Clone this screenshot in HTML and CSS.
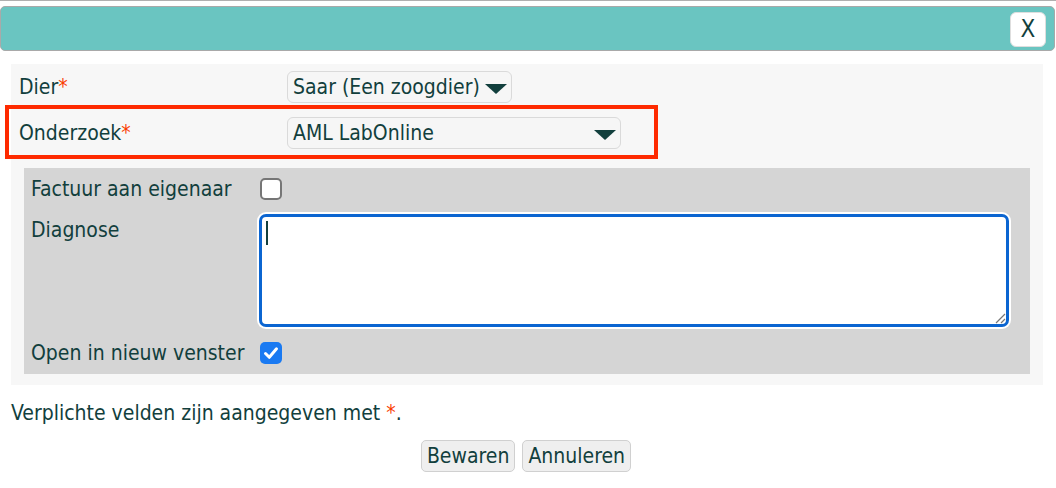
FILE: index.html
```html
<!DOCTYPE html>
<html lang="nl">
<head>
<meta charset="utf-8">
<title>Onderzoek</title>
<link rel="stylesheet" href="styles.css">
</head>
<body>
<div class="topline"></div>
<div class="titlebar"><button class="close" type="button">X</button></div>
<div class="panel">
  <div class="row">
    <div class="label">Dier<span class="req">*</span></div>
    <div class="select select-dier"><span>Saar (Een zoogdier)</span><svg class="arrow" viewBox="0 0 22 10" width="22" height="10"><path d="M0 0H22L11 10Z"/></svg></div>
  </div>
  <div class="row highlight">
    <div class="label">Onderzoek<span class="req">*</span></div>
    <div class="select select-wide"><span>AML LabOnline</span><svg class="arrow" viewBox="0 0 22 10" width="22" height="10"><path d="M0 0H22L11 10Z"/></svg></div>
  </div>
  <div class="subpanel">
    <div class="subrow check-row">
      <div class="sublabel">Factuur aan eigenaar</div>
      <span class="cb"></span>
    </div>
    <div class="subrow diag-row">
      <div class="sublabel">Diagnose</div>
      <div class="textarea"><span class="caret"></span><svg class="grip" viewBox="0 0 12 12" width="12" height="12"><path d="M11 2L2 11M11 7L7 11" stroke="#777" stroke-width="1.2" fill="none"/></svg></div>
    </div>
    <div class="subrow check-row last">
      <div class="sublabel">Open in nieuw venster</div>
      <span class="cb checked"><svg viewBox="0 0 22 22" width="22" height="22"><path d="M5.5 11.5L9.3 15.3L16.5 6.8" stroke="#fff" stroke-width="3" fill="none" stroke-linecap="round" stroke-linejoin="round"/></svg></span>
    </div>
  </div>
</div>
<p class="note">Verplichte velden zijn aangegeven met <span class="req">*</span>.</p>
<div class="buttons">
  <button class="btn" type="button">Bewaren</button>
  <button class="btn" type="button">Annuleren</button>
</div>
</body>
</html>
```
FILE: styles.css
```css
html, body {
  margin: 0;
  padding: 0;
  background: #ffffff;
}
body {
  font-family: "DejaVu Sans Condensed", "DejaVu Sans", Verdana, sans-serif;
  font-stretch: condensed;
  font-size: 21px;
  color: #123f3d;
  width: 1056px;
  height: 488px;
  overflow: hidden;
}
.topline {
  height: 1px;
  background: #b0b0b0;
}
.titlebar {
  box-sizing: border-box;
  margin-top: 5px;
  width: 1055px;
  height: 45px;
  background: #6ac5c1;
  border: 1px solid #a9a9a9;
  border-radius: 5px;
  display: flex;
  justify-content: flex-end;
  align-items: center;
  padding-right: 8px;
}
.close {
  box-sizing: border-box;
  width: 36px;
  height: 35px;
  margin-top: 1px;
  background: #ffffff;
  border: 1px solid #dedede;
  border-radius: 6px;
  font-family: "DejaVu Sans Condensed", "DejaVu Sans", sans-serif;
  font-stretch: condensed;
  font-size: 24px;
  color: #123f3d;
  padding: 0;
  line-height: 1;
}
.panel {
  box-sizing: border-box;
  margin: 13px 0 0 11px;
  width: 1032px;
  height: 321px;
  background: #f7f7f7;
  padding-top: 7px;
}
.row {
  display: flex;
  align-items: center;
  height: 32px;
}
.label {
  box-sizing: border-box;
  width: 276px;
  padding-left: 8px;
}
.req {
  color: #fa3c00;
}
.select {
  box-sizing: border-box;
  height: 32px;
  display: flex;
  align-items: center;
  justify-content: space-between;
  background: #f6f6f6;
  border: 1px solid #dadada;
  border-radius: 6px;
  padding: 0 4px 0 5px;
}
.select-dier {
  width: 225px;
}
.select-wide {
  width: 334px;
}
.arrow {
  fill: #123f3d;
  margin-top: 3px;
  flex: none;
}
.highlight {
  box-sizing: border-box;
  height: 54px;
  width: 653px;
  margin: 2px 0 0 -6px;
  border: 4px solid #fe2a00;
  padding: 2px 0 0 2px;
}
.subpanel {
  box-sizing: border-box;
  margin: 9px 0 0 13px;
  width: 1006px;
  height: 206px;
  background: #d5d5d5;
  padding: 10px 0 0 7px;
}
.subrow {
  display: flex;
}
.check-row {
  align-items: center;
  height: 22px;
}
.sublabel {
  width: 229px;
  flex: none;
}
.cb {
  box-sizing: border-box;
  width: 22px;
  height: 22px;
  border: 2px solid #767676;
  border-radius: 5px;
  background: #ffffff;
  display: block;
}
.cb.checked {
  border: none;
  background: #1a7af2;
}
.cb.checked svg {
  display: block;
}
.diag-row {
  margin-top: 14px;
}
.diag-row .sublabel {
  padding-top: 4px;
}
.textarea {
  position: relative;
  box-sizing: border-box;
  width: 750px;
  height: 113px;
  margin-left: -1px;
  background: #ffffff;
  border: 3px solid #0b65d1;
  border-radius: 7px;
  box-shadow: 0 0 0 2px #ffffff;
}
.caret {
  position: absolute;
  left: 4px;
  top: 4px;
  width: 2px;
  height: 24px;
  background: #123f3d;
}
.grip {
  position: absolute;
  right: 0;
  bottom: 0;
}
.last {
  margin-top: 15px;
}
.note {
  margin: 16px 0 0 11px;
  line-height: 24px;
}
.buttons {
  display: flex;
  justify-content: center;
  gap: 7px;
  margin-top: 15px;
  padding-right: 4px;
}
.btn {
  box-sizing: border-box;
  height: 32px;
  padding: 0 5px;
  background: #efefef;
  border: 1px solid #d0d0d0;
  border-radius: 5px;
  font-family: "DejaVu Sans Condensed", "DejaVu Sans", sans-serif;
  font-stretch: condensed;
  font-size: 21px;
  color: #123f3d;
}
```
